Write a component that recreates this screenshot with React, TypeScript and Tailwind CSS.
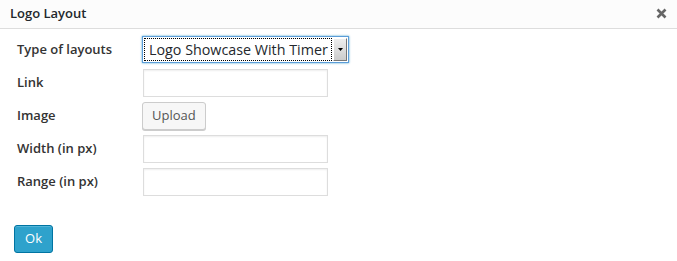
import React from 'react';

const font = { fontFamily: '"Open Sans", "Liberation Sans", sans-serif' };

const Row: React.FC<{ label: string; children: React.ReactNode }> = ({ label, children }) => (
  <div className="flex items-center h-[33px]">
    <label className="shrink-0 w-[143px] pl-[17px] text-[13px] font-semibold text-[#333]">{label}</label>
    {children}
  </div>
);

const TextInput = () => (
  <input type="text" className="w-[185px] h-[28px] border border-[#ddd] bg-white shadow-[inset_0_1px_2px_rgba(0,0,0,0.07)] outline-none" />
);

export default function App() {
  return (
    <div className="w-[677px] h-[261px] bg-white text-[#333]" style={font}>
      <div className="flex items-center justify-between h-[29px] bg-[#fcfcfc] border-b border-[#ddd] pl-[10px] pr-[10px]">
        <span className="text-[13px] font-semibold text-[#23282d]">Logo Layout</span>
        <svg width="11" height="11" viewBox="0 0 11 11" className="mt-[-2px]">
          <path d="M1.5 1.5 L9.5 9.5 M9.5 1.5 L1.5 9.5" stroke="#666" strokeWidth="2.6" />
        </svg>
      </div>
      <div className="pt-[4px]">
        <Row label="Type of layouts">
          <div className="flex items-center w-[207px] h-[27px] -ml-[1px] border border-[#5b9dd9] bg-white p-[1px] shadow-[0_0_2px_rgba(30,140,190,0.8)]">
            <div className="flex-1 h-full border border-dotted border-black flex items-center pl-[4px] text-[14.3px] text-[#23282d] whitespace-nowrap overflow-hidden">
              Logo Showcase With Timer
            </div>
            <div className="w-[14px] h-full ml-[1px] flex items-center justify-center bg-gradient-to-b from-[#eee] to-[#ccc] border-r border-b border-[#777] border-t border-l border-t-white border-l-white">
              <svg width="5" height="3" viewBox="0 0 5 3"><path d="M0 0 H5 L2.5 3 Z" fill="#000" /></svg>
            </div>
          </div>
        </Row>
        <Row label="Link"><TextInput /></Row>
        <Row label="Image">
          <button className="h-[28px] -ml-[1px] px-[9px] text-[13px] text-[#555] bg-[#f7f7f7] border border-[#ccc] rounded-[3px] shadow-[0_1px_0_#ccc]">
            Upload
          </button>
        </Row>
        <Row label="Width (in px)"><TextInput /></Row>
        <Row label="Range (in px)"><TextInput /></Row>
      </div>
      <div className="pl-[14px] pt-[27px]">
        <button className="h-[28px] w-[39px] text-[13px] text-white bg-[#2ea2cc] border border-[#0074a2] rounded-[3px] shadow-[inset_0_1px_0_rgba(120,200,230,0.5)]">
          Ok
        </button>
      </div>
    </div>
  );
}
